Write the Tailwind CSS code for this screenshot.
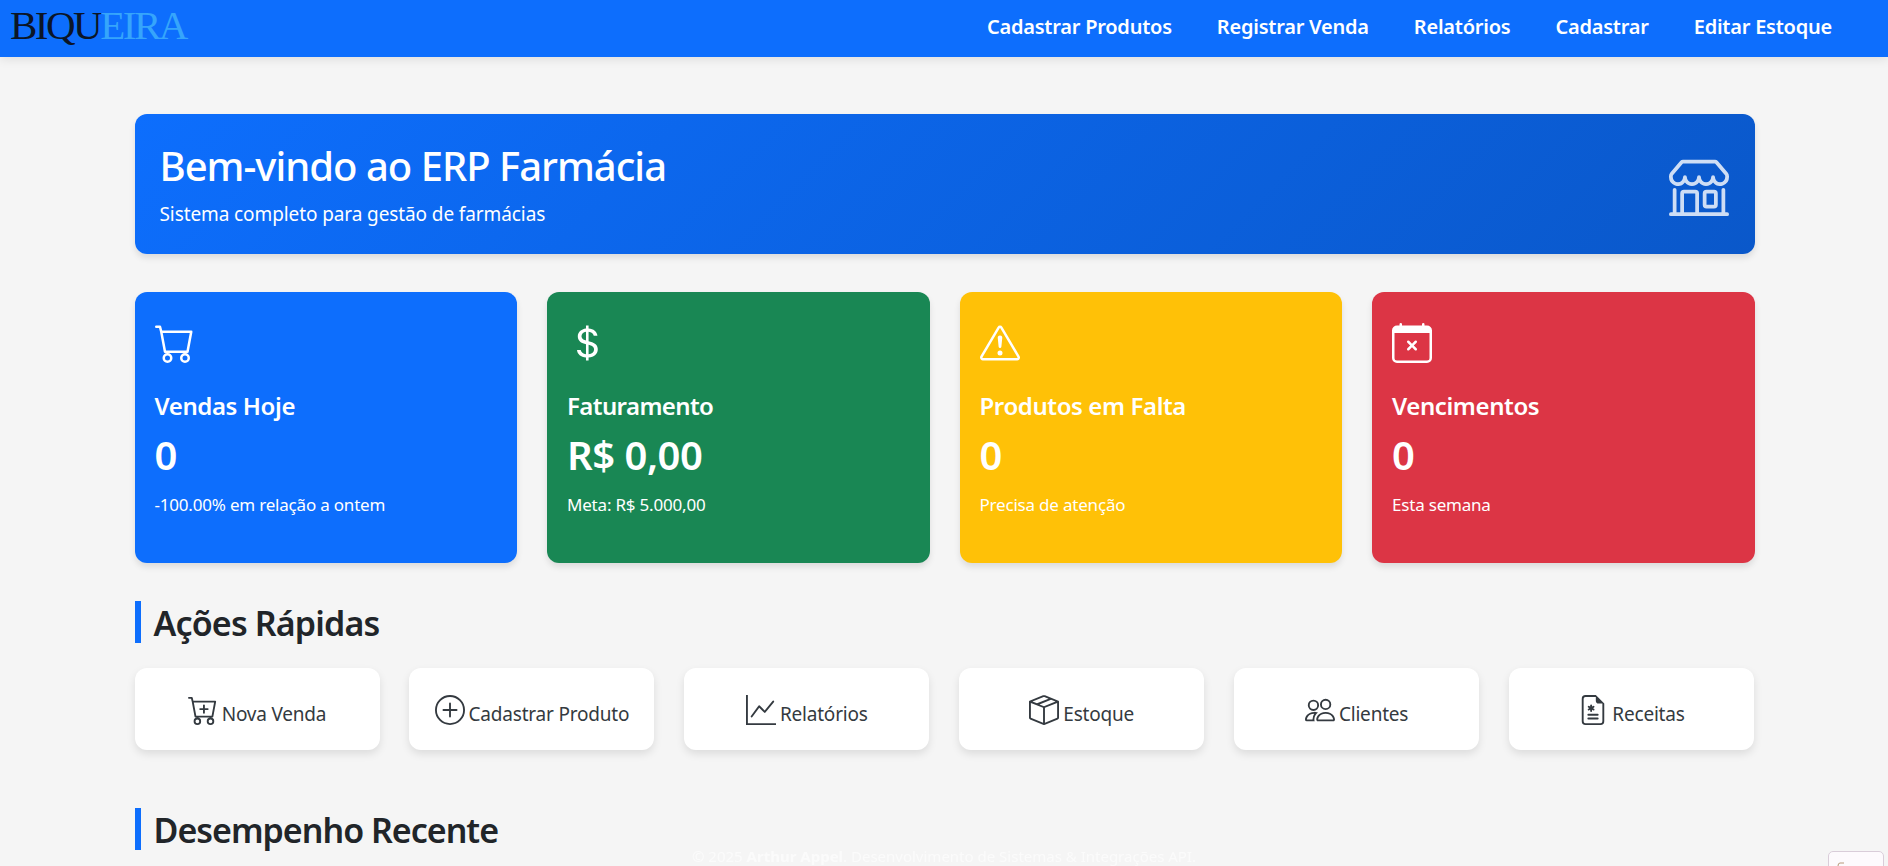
<!DOCTYPE html>
<html lang="pt-BR">
<head>
    <meta charset="UTF-8">
    <meta name="viewport" content="width=device-width, initial-scale=1.0">
    <title>ERP Farmácia</title>
    <script src="https://cdn.jsdelivr.net/npm/@tailwindcss/browser@4"></script>
</head>
<body class="h-screen overflow-hidden bg-[#f5f5f5] text-[#212529] font-['Noto_Sans',sans-serif]">

    <!-- navbar -->
    <nav class="h-[57px] bg-[#0d6efd] shadow-[0_2px_10px_rgba(0,0,0,0.1)] flex items-center justify-between pl-[10px] pr-[56px] relative z-10">
        <a href="#" class="font-['Liberation_Serif',serif] text-[41px] leading-none tracking-[-2.5px] -mt-[6px]"><span class="text-[#0b1526]">BIQU</span><span class="text-[#36a5fb]">EIRA</span></a>
        <div class="flex items-center gap-[45px] text-white text-[20px] font-semibold tracking-[-0.23px] -mt-[3px]">
            <a href="#">Cadastrar Produtos</a>
            <a href="#">Registrar Venda</a>
            <a href="#">Relatórios</a>
            <a href="#">Cadastrar</a>
            <a href="#">Editar Estoque</a>
        </div>
    </nav>

    <main class="w-[1620px] ml-[134.5px] pt-[57px]">

        <!-- hero -->
        <section class="h-[140px] rounded-[12px] bg-[linear-gradient(135deg,#0d6efd,#0a58ca)] text-white flex items-center justify-between pl-[25px] pr-[26px] shadow-[0_4px_6px_rgba(0,0,0,0.1)]">
            <div class="pt-[2px]">
                <h1 class="text-[40px] leading-[48px] font-medium tracking-[-1px]">Bem-vindo ao ERP Farmácia</h1>
                <p class="text-[19px] leading-[27px] tracking-[-0.1px] mt-[11px]">Sistema completo para gestão de farmácias</p>
            </div>
            <svg class="w-[60px] h-[60px] mt-[4px] opacity-80 fill-current" viewBox="0 0 16 16"><path d="M2.97 1.35A1 1 0 0 1 3.73 1h8.54a1 1 0 0 1 .76.35l2.609 3.044A1.5 1.5 0 0 1 16 5.37v.255a2.375 2.375 0 0 1-4.25 1.458A2.37 2.37 0 0 1 9.875 8 2.37 2.37 0 0 1 8 7.083 2.37 2.37 0 0 1 6.125 8a2.37 2.37 0 0 1-1.875-.917A2.375 2.375 0 0 1 0 5.625V5.37a1.5 1.5 0 0 1 .361-.976zm1.78 4.275a1.375 1.375 0 0 0 2.75 0 .5.5 0 0 1 1 0 1.375 1.375 0 0 0 2.75 0 .5.5 0 0 1 1 0 1.375 1.375 0 1 0 2.75 0V5.37a.5.5 0 0 0-.12-.325L12.27 2H3.73L1.12 5.045A.5.5 0 0 0 1 5.37v.255a1.375 1.375 0 0 0 2.75 0 .5.5 0 0 1 1 0M1.5 8.5A.5.5 0 0 1 2 9v6h1v-5a1 1 0 0 1 1-1h3a1 1 0 0 1 1 1v5h6V9a.5.5 0 0 1 1 0v6h.5a.5.5 0 0 1 0 1H.5a.5.5 0 0 1 0-1H1V9a.5.5 0 0 1 .5-.5M4 15h3v-5H4zm5-5a1 1 0 0 1 1-1h2a1 1 0 0 1 1 1v3a1 1 0 0 1-1 1h-2a1 1 0 0 1-1-1zm3 0h-2v3h2z"/></svg>
        </section>

        <!-- stat cards -->
        <section class="grid grid-cols-4 gap-[30px] mt-[38px] text-white">
            <div class="h-[271px] rounded-[12px] bg-[#0d6efd] px-[20px] pt-[31px] shadow-[0_4px_6px_rgba(0,0,0,0.1)]">
                <svg class="w-[40px] h-[40px] fill-current" viewBox="0 0 16 16"><path d="M0 1.5A.5.5 0 0 1 .5 1H2a.5.5 0 0 1 .485.379L2.89 3H14.5a.5.5 0 0 1 .491.592l-1.5 8A.5.5 0 0 1 13 12H4a.5.5 0 0 1-.491-.408L2.01 3.607 1.61 2H.5a.5.5 0 0 1-.5-.5M3.102 4l1.313 7h8.17l1.313-7zM5 12a2 2 0 1 0 0 4 2 2 0 0 0 0-4m7 0a2 2 0 1 0 0 4 2 2 0 0 0 0-4m-7 1a1 1 0 1 1 0 2 1 1 0 0 1 0-2m7 0a1 1 0 1 1 0 2 1 1 0 0 1 0-2"/></svg>
                <h3 class="text-[24px] leading-[36px] font-semibold tracking-[-0.4px] mt-[25px]">Vendas Hoje</h3>
                <p class="text-[40px] leading-[50px] font-semibold mt-[6px]">0</p>
                <p class="text-[17px] leading-[24px] tracking-[-0.2px] mt-[13px]">-100.00% em relação a ontem</p>
            </div>
            <div class="h-[271px] rounded-[12px] bg-[#198754] px-[20px] pt-[31px] shadow-[0_4px_6px_rgba(0,0,0,0.1)]">
                <svg class="w-[40px] h-[40px] fill-current" viewBox="0 0 16 16"><path d="M4 10.781c.148 1.667 1.513 2.85 3.591 3.003V15h1.043v-1.216c2.27-.179 3.678-1.438 3.678-3.3 0-1.59-.947-2.51-2.956-3.028l-.722-.187V3.467c1.122.11 1.879.714 2.07 1.616h1.47c-.166-1.6-1.54-2.748-3.54-2.875V1H7.591v1.233c-1.939.23-3.27 1.472-3.27 3.156 0 1.454.966 2.483 2.661 2.917l.61.162v4.031c-1.149-.17-1.94-.8-2.131-1.718zm3.391-3.836c-1.043-.263-1.6-.825-1.6-1.616 0-.944.704-1.641 1.8-1.828v3.495l-.2-.05zm1.591 1.872c1.287.323 1.852.859 1.852 1.769 0 1.097-.826 1.828-2.2 1.939V8.73z"/></svg>
                <h3 class="text-[24px] leading-[36px] font-semibold tracking-[-0.6px] mt-[25px]">Faturamento</h3>
                <p class="text-[40px] leading-[50px] font-semibold mt-[6px] tracking-[-0.5px]">R$ 0,00</p>
                <p class="text-[17px] leading-[24px] tracking-[-0.2px] mt-[13px]">Meta: R$ 5.000,00</p>
            </div>
            <div class="h-[271px] rounded-[12px] bg-[#ffc107] px-[20px] pt-[31px] shadow-[0_4px_6px_rgba(0,0,0,0.1)]">
                <svg class="w-[40px] h-[40px] fill-current" viewBox="0 0 16 16"><path d="M7.938 2.016A.13.13 0 0 1 8.002 2a.13.13 0 0 1 .063.016.15.15 0 0 1 .054.057l6.857 11.667c.036.06.035.124.002.183a.2.2 0 0 1-.054.06.1.1 0 0 1-.066.017H1.146a.1.1 0 0 1-.066-.017.2.2 0 0 1-.054-.06.18.18 0 0 1 .002-.183L7.884 2.073a.15.15 0 0 1 .054-.057m1.044-.45a1.13 1.13 0 0 0-1.96 0L.165 13.233c-.457.778.091 1.767.98 1.767h13.713c.889 0 1.438-.99.98-1.767z"/><path d="M7.002 12a1 1 0 1 1 2 0 1 1 0 0 1-2 0M7.1 5.995a.905.905 0 1 1 1.8 0l-.35 3.507a.552.552 0 0 1-1.1 0z"/></svg>
                <h3 class="text-[24px] leading-[36px] font-semibold tracking-[-0.4px] mt-[25px]">Produtos em Falta</h3>
                <p class="text-[40px] leading-[50px] font-semibold mt-[6px]">0</p>
                <p class="text-[17px] leading-[24px] tracking-[-0.2px] mt-[13px]">Precisa de atenção</p>
            </div>
            <div class="h-[271px] rounded-[12px] bg-[#dc3545] px-[20px] pt-[31px] shadow-[0_4px_6px_rgba(0,0,0,0.1)]">
                <svg class="w-[40px] h-[40px] fill-current" viewBox="0 0 16 16"><path d="M6.146 7.146a.5.5 0 0 1 .708 0L8 8.293l1.146-1.147a.5.5 0 1 1 .708.708L8.707 9l1.147 1.146a.5.5 0 0 1-.708.708L8 9.707l-1.146 1.147a.5.5 0 0 1-.708-.708L7.293 9 6.146 7.854a.5.5 0 0 1 0-.708"/><path d="M3.5 0a.5.5 0 0 1 .5.5V1h8V.5a.5.5 0 0 1 1 0V1h1a2 2 0 0 1 2 2v11a2 2 0 0 1-2 2H2a2 2 0 0 1-2-2V3a2 2 0 0 1 2-2h1V.5a.5.5 0 0 1 .5-.5M1 4v10a1 1 0 0 0 1 1h12a1 1 0 0 0 1-1V4z"/></svg>
                <h3 class="text-[24px] leading-[36px] font-semibold tracking-[-0.4px] mt-[25px]">Vencimentos</h3>
                <p class="text-[40px] leading-[50px] font-semibold mt-[6px]">0</p>
                <p class="text-[17px] leading-[24px] tracking-[-0.2px] mt-[13px]">Esta semana</p>
            </div>
        </section>

        <!-- acoes rapidas -->
        <h2 class="h-[42px] mt-[38px] border-l-[6px] border-[#0d6efd] pl-[13px] text-[34px] leading-[44px] font-semibold tracking-[-0.85px]">Ações Rápidas</h2>
        <section class="w-[1619.5px] grid grid-cols-6 gap-[29.9px] mt-[25px] text-[19px] text-[#343a40] tracking-[-0.2px]">
            <a href="#" class="h-[82px] rounded-[12px] bg-white flex items-center justify-center gap-[4px] shadow-[0_4px_8px_rgba(0,0,0,0.1)]">
                <svg class="w-[30px] h-[30px] mt-[2px] fill-current" viewBox="0 0 16 16"><path d="M9 5.5a.5.5 0 0 0-1 0V7H6.5a.5.5 0 0 0 0 1H8v1.5a.5.5 0 0 0 1 0V8h1.5a.5.5 0 0 0 0-1H9z"/><path d="M.5 1a.5.5 0 0 0 0 1h1.11l.401 1.607 1.498 7.985A.5.5 0 0 0 4 12h1a2 2 0 1 0 0 4 2 2 0 0 0 0-4h7a2 2 0 1 0 0 4 2 2 0 0 0 0-4h1a.5.5 0 0 0 .491-.408l1.5-8A.5.5 0 0 0 14.5 3H2.89l-.405-1.621A.5.5 0 0 0 2 1zm3.915 10L3.102 4h10.796l-1.313 7zM6 14a1 1 0 1 1-2 0 1 1 0 0 1 2 0m7 0a1 1 0 1 1-2 0 1 1 0 0 1 2 0"/></svg>
                <span class="mt-[10px]">Nova Venda</span>
            </a>
            <a href="#" class="h-[82px] rounded-[12px] bg-white flex items-center justify-center gap-[4px] shadow-[0_4px_8px_rgba(0,0,0,0.1)]">
                <svg class="w-[30px] h-[30px] mt-[2px] fill-current" viewBox="0 0 16 16"><path d="M8 15A7 7 0 1 1 8 1a7 7 0 0 1 0 14m0 1A8 8 0 1 0 8 0a8 8 0 0 0 0 16"/><path d="M8 4a.5.5 0 0 1 .5.5v3h3a.5.5 0 0 1 0 1h-3v3a.5.5 0 0 1-1 0v-3h-3a.5.5 0 0 1 0-1h3v-3A.5.5 0 0 1 8 4"/></svg>
                <span class="mt-[10px]">Cadastrar Produto</span>
            </a>
            <a href="#" class="h-[82px] rounded-[12px] bg-white flex items-center justify-center gap-[4px] shadow-[0_4px_8px_rgba(0,0,0,0.1)]">
                <svg class="w-[30px] h-[30px] mt-[2px] fill-current" viewBox="0 0 16 16"><path d="M0 0h1v15h15v1H0zm14.817 3.113a.5.5 0 0 1 .07.704l-4.5 5.5a.5.5 0 0 1-.74.037L7.06 6.767l-3.656 5.027a.5.5 0 0 1-.808-.588l4-5.5a.5.5 0 0 1 .758-.06l2.609 2.61 4.15-5.073a.5.5 0 0 1 .704-.07"/></svg>
                <span class="mt-[10px]">Relatórios</span>
            </a>
            <a href="#" class="h-[82px] rounded-[12px] bg-white flex items-center justify-center gap-[4px] shadow-[0_4px_8px_rgba(0,0,0,0.1)]">
                <svg class="w-[30px] h-[30px] mt-[2px] fill-current" viewBox="0 0 16 16"><path d="M8.186 1.113a.5.5 0 0 0-.372 0L1.846 3.5l2.404.961L10.404 2zm3.564 1.426L5.596 5 8 5.961 14.154 3.5zm3.25 1.7-6.5 2.6v7.922l6.5-2.6V4.24zM7.5 14.762V6.838L1 4.239v7.925zM7.443.184a1.5 1.5 0 0 1 1.114 0l7.129 2.852A.5.5 0 0 1 16 3.5v8.662a1 1 0 0 1-.629.928l-7.185 2.874a.5.5 0 0 1-.372 0L.63 13.09a1 1 0 0 1-.63-.928V3.5a.5.5 0 0 1 .314-.464z"/></svg>
                <span class="mt-[10px]">Estoque</span>
            </a>
            <a href="#" class="h-[82px] rounded-[12px] bg-white flex items-center justify-center gap-[4px] shadow-[0_4px_8px_rgba(0,0,0,0.1)]">
                <svg class="w-[30px] h-[30px] mt-[2px] fill-current" viewBox="0 0 16 16"><path d="M15 14s1 0 1-1-1-4-5-4-5 3-5 4 1 1 1 1zm-7.978-1L7 12.996c.001-.264.167-1.03.76-1.72C8.312 10.629 9.282 10 11 10c1.717 0 2.687.63 3.24 1.276.593.69.758 1.457.76 1.72l-.008.002-.014.002zM11 7a2 2 0 1 0 0-4 2 2 0 0 0 0 4m3-2a3 3 0 1 1-6 0 3 3 0 0 1 6 0M6.936 9.28a6 6 0 0 0-1.23-.247A7 7 0 0 0 5 9c-4 0-5 3-5 4q0 1 1 1h4.216A2.24 2.24 0 0 1 5 13c0-1.01.377-2.042 1.09-2.904.243-.294.526-.569.846-.816M4.92 10A5.5 5.5 0 0 0 4 13H1c0-.26.164-1.03.76-1.724.545-.636 1.492-1.256 3.16-1.275ZM1.5 5.5a3 3 0 1 1 6 0 3 3 0 0 1-6 0m3-2a2 2 0 1 0 0 4 2 2 0 0 0 0-4"/></svg>
                <span class="mt-[10px]">Clientes</span>
            </a>
            <a href="#" class="h-[82px] rounded-[12px] bg-white flex items-center justify-center gap-[4px] shadow-[0_4px_8px_rgba(0,0,0,0.1)]">
                <svg class="w-[30px] h-[30px] mt-[2px] fill-current" viewBox="0 0 16 16"><path d="M7.5 5.5a.5.5 0 0 0-1 0v.634l-.549-.317a.5.5 0 1 0-.5.866L6 7l-.549.317a.5.5 0 1 0 .5.866l.549-.317V8.5a.5.5 0 1 0 1 0v-.634l.549.317a.5.5 0 1 0 .5-.866L8 7l.549-.317a.5.5 0 1 0-.5-.866l-.549.317zm-2 4.5a.5.5 0 0 0 0 1h5a.5.5 0 0 0 0-1zm0 2a.5.5 0 0 0 0 1h5a.5.5 0 0 0 0-1z"/><path d="M14 14V4.5L9.5 0H4a2 2 0 0 0-2 2v12a2 2 0 0 0 2 2h8a2 2 0 0 0 2-2M9.5 3A1.5 1.5 0 0 0 11 4.5h2V14a1 1 0 0 1-1 1H4a1 1 0 0 1-1-1V2a1 1 0 0 1 1-1h5.5z"/></svg>
                <span class="mt-[10px]">Receitas</span>
            </a>
        </section>

        <h2 class="h-[42px] mt-[58px] border-l-[6px] border-[#0d6efd] pl-[13px] text-[34px] leading-[44px] font-semibold tracking-[-1px]">Desempenho Recente</h2>
    </main>

    <!-- footer fixo -->
    <footer class="fixed -bottom-[2px] inset-x-0 h-[24px] text-center text-[15px] leading-[24px] text-[#fbfbfb]">© 2025 <strong>Arthur Appel</strong>. Desenvolvimento de Sistemas &amp; Integrações API.</footer>

    <!-- widget cortado no canto -->
    <div class="fixed left-[1828px] top-[851px] w-[56px] h-[40px] bg-[#fdfafd] border border-[#d9cdd9] rounded-[5px]">
        <svg class="absolute left-[7px] top-[10px] w-[10px] h-[10px] fill-none stroke-[#b89a7a]" viewBox="0 0 10 10"><path d="M8 1H4Q2 1 2 4v6"/></svg>
    </div>
</body>
</html>
